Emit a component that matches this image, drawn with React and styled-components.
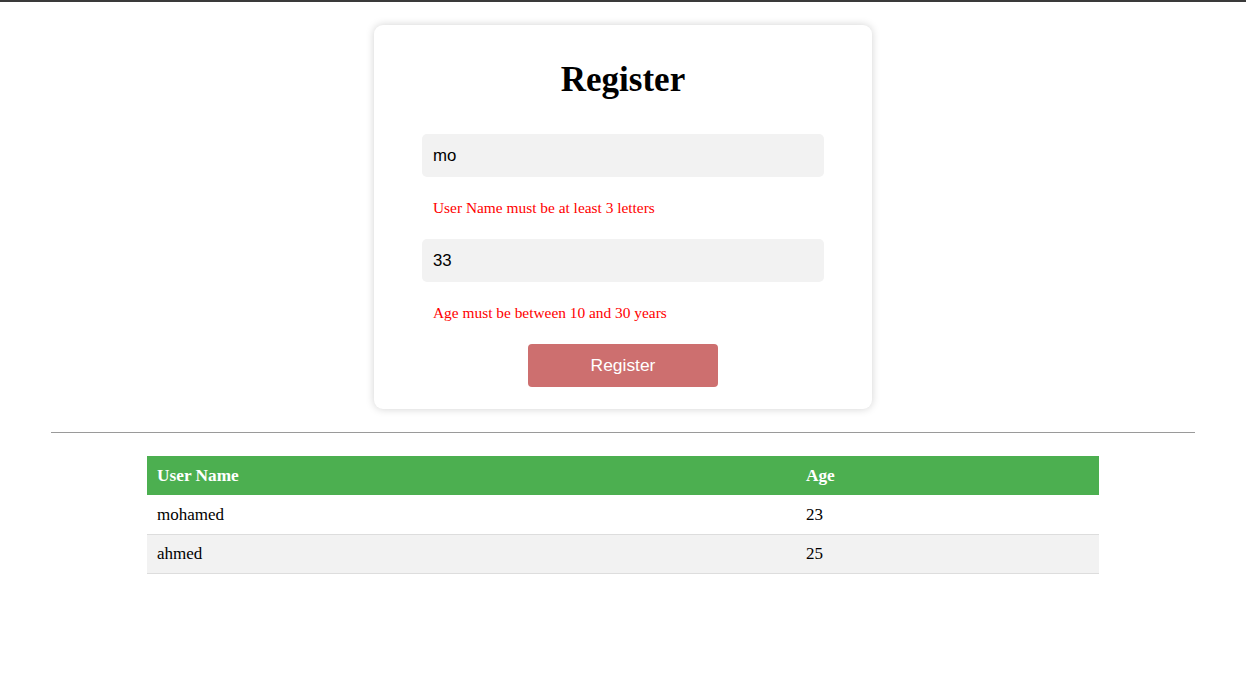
import React from "react";
import styled, { createGlobalStyle } from "styled-components";

const Global = createGlobalStyle`
  html, body { margin: 0; padding: 0; background: #fff; }
  body { font-family: "Liberation Serif", "Times New Roman", serif; color: #000; }
`;

const TopBar = styled.div`
  height: 2px;
  background: #3a3a3a;
`;

const Page = styled.div`
  display: flex;
  flex-direction: column;
  align-items: center;
  padding-top: 23px;
`;

const Card = styled.form`
  box-sizing: border-box;
  width: 498px;
  padding: 31px 48px 22px;
  border-radius: 9px;
  background: #fff;
  box-shadow: 0 0 8px rgba(0, 0, 0, 0.18);
  display: flex;
  flex-direction: column;
  align-items: stretch;
`;

const Title = styled.h1`
  margin: 0 0 30px;
  text-align: center;
  font-family: "Liberation Serif", serif;
  font-weight: bold;
  font-size: 35px;
  line-height: 48px;
`;

const Input = styled.input`
  box-sizing: border-box;
  height: 43px;
  width: 100%;
  border: none;
  outline: none;
  border-radius: 5px;
  background: #f2f2f2;
  padding: 0 11px;
  font-family: "Liberation Sans", Arial, sans-serif;
  font-size: 16.8px;
  color: #000;
`;

const ErrorText = styled.p`
  margin: 0;
  padding: 0 11px;
  height: ${(p) => p.$h}px;
  display: flex;
  align-items: center;
  color: #ff0000;
  font-family: "Liberation Serif", serif;
  font-size: 15.4px;
`;

const Button = styled.button`
  align-self: center;
  width: 190px;
  height: 43px;
  border: none;
  border-radius: 4px;
  background: #cd6f6f;
  color: #fff;
  font-family: "Liberation Sans", Arial, sans-serif;
  font-size: 17.4px;
  cursor: pointer;
`;

const Rule = styled.hr`
  align-self: stretch;
  margin: 23px 51px 23px;
  border: none;
  border-top: 1px solid #9a9a9a;
  height: 0;
`;

const Table = styled.table`
  width: 952px;
  border-collapse: collapse;
  font-family: "Liberation Serif", serif;
  font-size: 17px;
`;

const Th = styled.th`
  background: #4caf50;
  color: #fff;
  text-align: left;
  font-weight: bold;
  font-size: 17.3px;
  height: 39px;
  padding: 1px 10px 0;
  box-sizing: border-box;
  width: ${(p) => p.$w || "auto"};
`;

const Tr = styled.tr`
  background: ${(p) => (p.$alt ? "#f2f2f2" : "#fff")};
  border-bottom: 1px solid #dddddd;
`;

const Td = styled.td`
  height: 39px;
  padding: 1px 10px 0;
  box-sizing: border-box;
`;

const users = [
  { name: "mohamed", age: 23 },
  { name: "ahmed", age: 25 },
];

export default function App() {
  return (
    <>
      <Global />
      <TopBar />
      <Page>
        <Card onSubmit={(e) => e.preventDefault()}>
          <Title>Register</Title>
          <Input defaultValue="mo" />
          <ErrorText $h={62}>User Name must be at least 3 letters</ErrorText>
          <Input defaultValue="33" />
          <ErrorText $h={62}>Age must be between 10 and 30 years</ErrorText>
          <Button type="submit">Register</Button>
        </Card>
        <Rule />
        <Table>
          <thead>
            <tr>
              <Th $w="649px">User Name</Th>
              <Th>Age</Th>
            </tr>
          </thead>
          <tbody>
            {users.map((u, i) => (
              <Tr key={u.name} $alt={i % 2 === 1}>
                <Td>{u.name}</Td>
                <Td>{u.age}</Td>
              </Tr>
            ))}
          </tbody>
        </Table>
      </Page>
    </>
  );
}
